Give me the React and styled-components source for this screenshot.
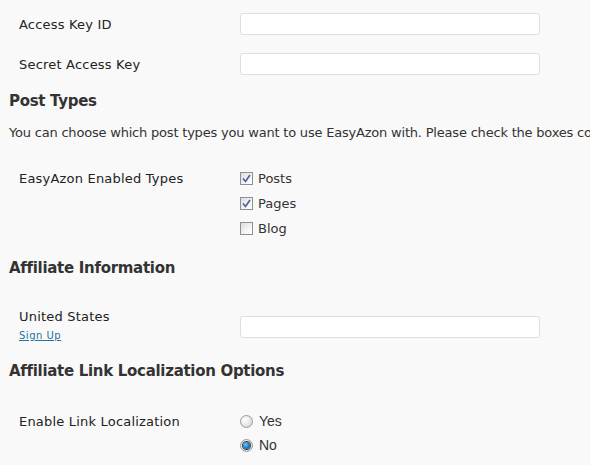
import React from "react";
import styled, { createGlobalStyle } from "styled-components";

const GlobalStyle = createGlobalStyle`
  html, body {
    margin: 0;
    padding: 0;
    background: #f9f9f9;
  }
  body {
    font-family: "DejaVu Sans", Verdana, sans-serif;
    font-size: 13px;
    color: #333;
    overflow: hidden;
  }
`;

const Page = styled.div`
  width: 590px;
  height: 465px;
  padding: 4px 0 0 9px;
  box-sizing: border-box;
  overflow: hidden;
`;

const Row = styled.div`
  display: flex;
  align-items: ${p => (p.top ? "flex-start" : "center")};
  height: ${p => p.h}px;
  margin-top: ${p => p.mt || 0}px;
`;

const Label = styled.div`
  width: 231px;
  padding-left: 10px;
  box-sizing: border-box;
  color: #222;
  line-height: 25px;
  letter-spacing: 0.2px;
  flex-shrink: 0;
`;

const SubLink = styled.a`
  display: block;
  font-size: 10px;
  line-height: 12px;
  color: #21759b;
  text-decoration: underline;
  letter-spacing: 0.5px;
  margin-top: 1px;
`;

const Field = styled.div`
  display: flex;
  flex-direction: column;
  padding-top: ${p => p.pt || 0}px;
`;

const TextInput = styled.input`
  width: 300px;
  height: 22px;
  box-sizing: border-box;
  border: 1px solid #dfdfdf;
  border-radius: 3px;
  background: #fff;
  outline: none;
  padding: 2px 4px;
  font-family: inherit;
`;

const Heading = styled.h3`
  margin: ${p => p.mt}px 0 0;
  font-size: 15px;
  line-height: 20px;
  font-weight: bold;
  letter-spacing: -0.3px;
  color: #333;
  white-space: nowrap;
`;

const Description = styled.p`
  margin: 13px 0 0;
  line-height: 18px;
  letter-spacing: -0.2px;
  white-space: nowrap;
  color: #333;
`;

const Option = styled.label`
  display: flex;
  align-items: center;
  height: ${p => p.h || 25}px;
  color: #333;
`;

const Box = styled.span`
  width: 13px;
  height: 13px;
  box-sizing: border-box;
  border: 1px solid #8e8f8f;
  background: linear-gradient(135deg, #dcdcdc 0%, #f4f4f4 60%, #ffffff 100%);
  margin-right: 5px;
  display: flex;
  align-items: center;
  justify-content: center;
`;

const Circle = styled.span`
  width: 13px;
  height: 13px;
  box-sizing: border-box;
  border-radius: 50%;
  border: 1px solid #9a9a9a;
  background: radial-gradient(circle at 35% 35%, #ffffff 0%, #e6e6e6 55%, #cfcfcf 100%);
  margin-right: 6px;
  display: flex;
  align-items: center;
  justify-content: center;
`;

const Dot = styled.span`
  width: 7px;
  height: 7px;
  border-radius: 50%;
  background: radial-gradient(circle at 40% 40%, #7fc6ef 0%, #1f7ec0 50%, #0d3f6b 100%);
  box-shadow: 0 0 0 1px #2b3f55;
`;

const RadioText = styled.span`
  font-family: "Liberation Sans", Arial, sans-serif;
  font-size: 14px;
`;

const Checkbox = ({ checked, children }) => (
  <Option>
    <Box>
      {checked && (
        <svg width="9" height="9" viewBox="0 0 9 9">
          <path d="M1 4.5 L3.5 7.5 L8 1" fill="none" stroke="#4b5d96" strokeWidth="1.6" />
        </svg>
      )}
    </Box>
    {children}
  </Option>
);

const Radio = ({ checked, children, h }) => (
  <Option h={h}>
    <Circle>{checked && <Dot />}</Circle>
    <RadioText>{children}</RadioText>
  </Option>
);

export default function App() {
  return (
    <>
      <GlobalStyle />
      <Page>
        <Row h={40}>
          <Label>Access Key ID</Label>
          <TextInput />
        </Row>
        <Row h={40}>
          <Label>Secret Access Key</Label>
          <TextInput />
        </Row>

        <Heading mt={7}>Post Types</Heading>
        <Description>
          You can choose which post types you want to use EasyAzon with. Please check the boxes corresponding to the post types.
        </Description>
        <Row h={75} mt={24} top>
          <Label>EasyAzon Enabled Types</Label>
          <Field>
            <Checkbox checked>Posts</Checkbox>
            <Checkbox checked>Pages</Checkbox>
            <Checkbox>Blog</Checkbox>
          </Field>
        </Row>

        <Heading mt={17}>Affiliate Information</Heading>
        <Row h={54} mt={26} top>
          <Label>
            United States
            <SubLink>Sign Up</SubLink>
          </Label>
          <Field pt={12}>
            <TextInput />
          </Field>
        </Row>

        <Heading mt={3}>Affiliate Link Localization Options</Heading>
        <Row h={60} mt={28} top>
          <Label>Enable Link Localization</Label>
          <Field>
            <Radio h={24}>Yes</Radio>
            <Radio checked h={24}>No</Radio>
          </Field>
        </Row>
      </Page>
    </>
  );
}
